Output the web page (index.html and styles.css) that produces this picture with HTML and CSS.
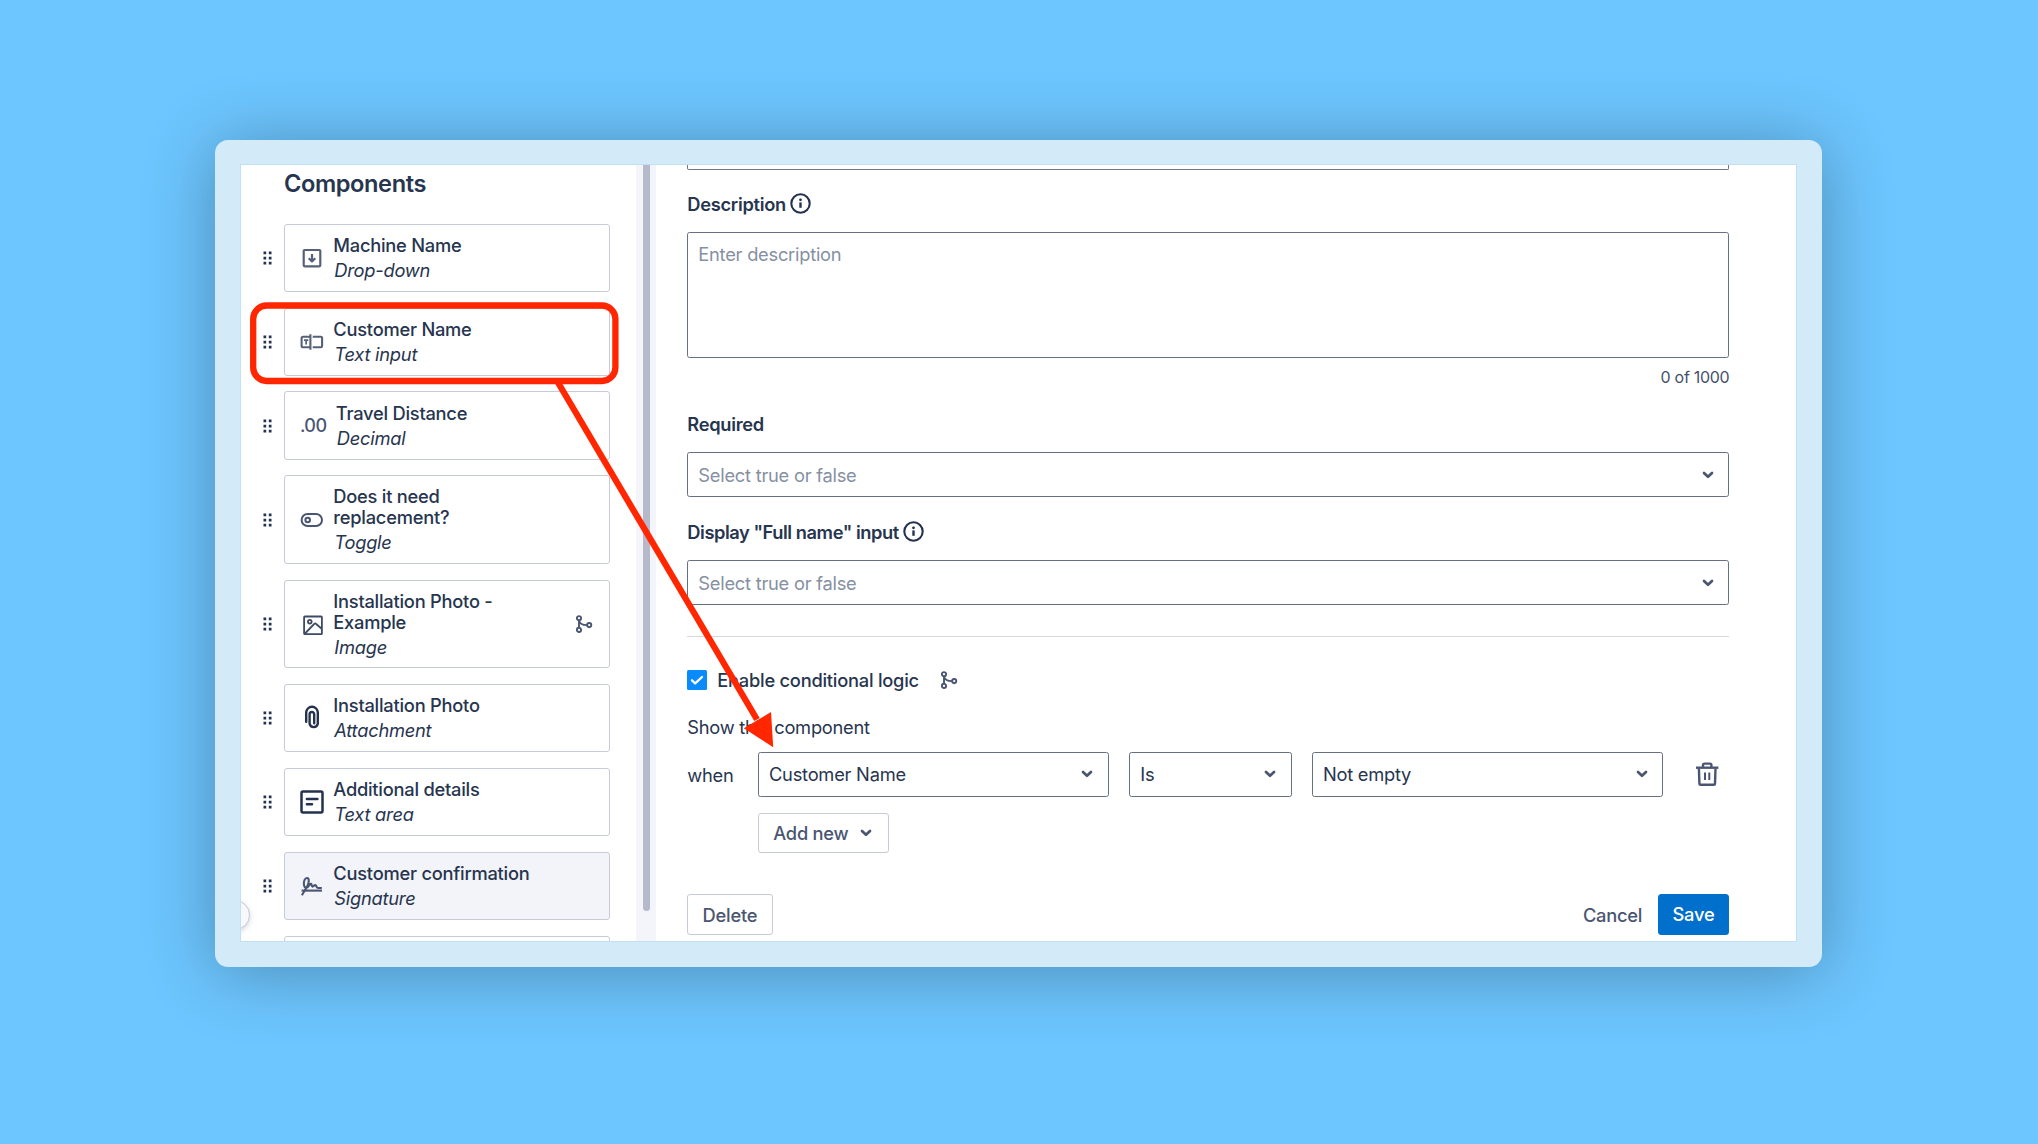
FILE: index.html
```html
<!DOCTYPE html>
<html lang="en">
<head>
<meta charset="utf-8">
<title>Components</title>
<link rel="stylesheet" href="styles.css">
</head>
<body>
<svg class="defs" width="0" height="0">
  <symbol id="grip" viewBox="0 0 10 14">
    <path d="M.5 .6h2.7v2.7H.5zM5.8 .6h2.7v2.7H5.8zM.5 5.7h2.7v2.7H.5zM5.8 5.7h2.7v2.7H5.8zM.5 10.8h2.7v2.7H.5zM5.8 10.8h2.7v2.7H5.8z" fill="#24324f"/>
  </symbol>
  <symbol id="chevron" viewBox="0 0 12 8">
    <path d="M2 2l4 3.8L10 2" fill="none" stroke="#4a5671" stroke-width="2.7" stroke-linecap="round" stroke-linejoin="round"/>
  </symbol>
  <symbol id="info" viewBox="0 0 21 21">
    <circle cx="10.5" cy="10.5" r="9.2" fill="none" stroke="#24324f" stroke-width="2.1"/>
    <circle cx="10.5" cy="6.8" r="1.4" fill="#24324f"/>
    <path d="M10.5 9.4v5.4" stroke="#24324f" stroke-width="2.4"/>
  </symbol>
  <symbol id="branch" viewBox="0 0 18 18">
    <g fill="none" stroke="#4a5671" stroke-width="1.9">
      <circle cx="4" cy="3.2" r="2.1"/>
      <circle cx="4" cy="14.9" r="2.1"/>
      <circle cx="14.2" cy="10.1" r="2.1"/>
      <path d="M4 5.3v7.5M4 5.3c.5 3.2 3.300 4.700 8.100 4.800"/>
    </g>
  </symbol>
</svg>

<main class="frame">
  <div class="screen">
    <aside class="sidebar">
      <div class="list">
        <h1 class="heading">Components</h1>
        <div class="item">
          <svg class="grip"><use href="#grip"/></svg>
          <div class="card">
            <svg class="icon" viewBox="0 0 24 24"><g fill="none" stroke="#566178" stroke-width="2.200" stroke-linejoin="round"><rect x="3.700" y="4" width="16.600" height="16.300" rx="1"/><path d="M12 8v7.200M8.700 12.200l3.300 3.300 3.300-3.300"/></g></svg>
            <div class="text"><div class="name">Machine Name</div><div class="kind">Drop-down</div></div>
          </div>
        </div>
        <div class="item">
          <svg class="grip"><use href="#grip"/></svg>
          <div class="card">
            <svg class="icon" viewBox="0 0 24 24"><g fill="none" stroke="#566178" stroke-width="2.100"><path d="M9.700 6.700H3.200a1.600 1.600 0 0 0-1.600 1.600v7.400a1.600 1.600 0 0 0 1.600 1.600h6.500M10.400 4.200v15.600M12.700 6.700h8a1.400 1.400 0 0 1 1.400 1.400v7.800a1.400 1.400 0 0 1-1.400 1.400h-8"/><path d="M4 10.200h4.300M6.150 10.200v4.300" stroke-width="1.700"/></g></svg>
            <div class="text"><div class="name">Customer Name</div><div class="kind">Text input</div></div>
          </div>
        </div>
        <div class="item">
          <svg class="grip"><use href="#grip"/></svg>
          <div class="card">
            <span class="decimal">.00</span>
            <div class="text"><div class="name">Travel Distance</div><div class="kind">Decimal</div></div>
          </div>
        </div>
        <div class="item tall">
          <svg class="grip"><use href="#grip"/></svg>
          <div class="card">
            <svg class="icon" viewBox="0 0 24 24"><g fill="none" stroke="#4a5671" stroke-width="2"><rect x="1.600" y="6" width="20.400" height="12" rx="6"/><circle cx="7.700" cy="12" r="2.300"/></g></svg>
            <div class="text"><div class="name">Does it need<br>replacement?</div><div class="kind">Toggle</div></div>
          </div>
        </div>
        <div class="item tall">
          <svg class="grip"><use href="#grip"/></svg>
          <div class="card">
            <svg class="icon" viewBox="0 0 24 24"><g fill="none" stroke="#3d4a66" stroke-width="1.800" stroke-linejoin="round"><rect x="4.100" y="4.500" width="17.800" height="17.700" rx=".8"/><circle cx="9.800" cy="9.700" r="1.800"/><path d="M5 21.500l9.500-9.800a1 1 0 0 1 1.400 0l5.800 5"/></g></svg>
            <div class="text"><div class="name">Installation Photo -<br>Example</div><div class="kind">Image</div></div>
            <svg class="branch"><use href="#branch"/></svg>
          </div>
        </div>
        <div class="item">
          <svg class="grip"><use href="#grip"/></svg>
          <div class="card">
            <svg class="icon" viewBox="0 0 24 24"><path d="M6.200 15.800V6.600a5.700 5.700 0 0 1 11.600 0v11.200a4.200 4.200 0 0 1-8.200 0V8.300a2.300 2.300 0 0 1 4.600 0v8.900" fill="none" stroke="#24324f" stroke-width="2.400" stroke-linecap="round"/></svg>
            <div class="text"><div class="name">Installation Photo</div><div class="kind">Attachment</div></div>
          </div>
        </div>
        <div class="item">
          <svg class="grip"><use href="#grip"/></svg>
          <div class="card">
            <svg class="icon" viewBox="0 0 24 24"><g fill="none" stroke="#24324f" stroke-width="2.500"><rect x="1.500" y="1.500" width="21" height="21" rx="1.500"/><path d="M6.900 9H17.400M6.900 14.300h5.100" stroke-linecap="round"/></g></svg>
            <div class="text"><div class="name">Additional details</div><div class="kind">Text area</div></div>
          </div>
        </div>
        <div class="item">
          <svg class="grip"><use href="#grip"/></svg>
          <div class="card selected">
            <svg class="icon" viewBox="0 0 24 24"><g fill="none" stroke="#4a5671" stroke-width="2.100" stroke-linejoin="round"><path d="M1.600 16.600H22"/><path d="M1.900 21.200C3.400 18.500 5.600 15.600 7.300 12.200C9.100 8.600 9.500 4.100 7.100 4C4.700 3.900 3.600 7.600 3.900 10.300C4.100 12.600 5.200 14 6.700 13.800C8.400 13.600 9.500 10.300 10.700 9.800C12 9.300 11.300 12.700 12.600 12.600C13.700 12.500 14.200 11 15.300 11.100C16.500 11.200 16 13.200 17.500 13.700C18.900 14.100 20.200 13.900 21.800 14"/></g></svg>
            <div class="text"><div class="name">Customer confirmation</div><div class="kind">Signature</div></div>
          </div>
        </div>
        <div class="item"><span></span><div class="card"></div></div>
      </div>
      <div class="track"><div class="thumb"></div></div>
      <div class="collapse"></div>
    </aside>

    <section class="form">
      <div class="field-end"></div>
      <div class="label first">Description<svg class="info"><use href="#info"/></svg></div>
      <div class="textarea">Enter description</div>
      <div class="counter">0 of 1000</div>
      <div class="label required">Required</div>
      <div class="select placeholder">Select true or false<svg class="chevron"><use href="#chevron"/></svg></div>
      <div class="label display"><span class="tight">Display "Full name" input</span><svg class="info"><use href="#info"/></svg></div>
      <div class="select placeholder">Select true or false<svg class="chevron"><use href="#chevron"/></svg></div>
      <div class="divider"></div>
      <div class="enable">
        <svg class="checkbox" viewBox="0 0 20 20"><rect width="20" height="20" rx="1.500" fill="#0a8bfb"/><path d="M5 10.300l3.200 3L15 7" fill="none" stroke="#fff" stroke-width="2.300" stroke-linecap="round" stroke-linejoin="round"/></svg>
        <span>Enable conditional logic</span>
        <svg class="branch"><use href="#branch"/></svg>
      </div>
      <div class="show">Show this component</div>
      <div class="condition">
        <span class="when">when</span>
        <div class="select">Customer Name<svg class="chevron"><use href="#chevron"/></svg></div>
        <div class="select">Is<svg class="chevron"><use href="#chevron"/></svg></div>
        <div class="select">Not empty<svg class="chevron"><use href="#chevron"/></svg></div>
        <svg class="trash" viewBox="0 0 24 24"><g fill="none" stroke="#4a5671" stroke-width="2.400" stroke-linejoin="round"><path d="M1 5.700h22.400"/><path d="M8 5V2.900a1.300 1.300 0 0 1 1.300-1.300h5.800a1.300 1.300 0 0 1 1.300 1.300V5"/><path d="M3.900 6.500l.5 15.200a1.100 1.100 0 0 0 1.100 1.100h13.400a1.100 1.100 0 0 0 1.100-1.100l.5-15.200"/><path d="M10 10.500v7.500M14.300 10.500v7.500" stroke-width="2"/></g></svg>
      </div>
      <div class="button add">Add new<svg class="chevron"><use href="#chevron"/></svg></div>
      <div class="footer">
        <div class="button">Delete</div>
        <span class="cancel">Cancel</span>
        <div class="save">Save</div>
      </div>
    </section>
  </div>
</main>

<svg class="annotation" viewBox="0 0 2038 1144">
  <rect x="253.200" y="305.500" width="362.200" height="75.500" rx="13.500" fill="none" stroke="#ff2600" stroke-width="6.300"/>
  <path d="M556.500 380L757 719.500" stroke="#ff2600" stroke-width="6.300"/>
  <path d="M743.800 728.300L771 712L773.200 747.300z" fill="#ff2600"/>
</svg>
</body>
</html>
```
FILE: styles.css
```css
* { box-sizing: border-box; }

body {
  margin: 0;
  height: 1144px;
  padding: 140px 216px 0 215px;
  overflow: hidden;
  background: #6dc6ff;
  color: #27354f;
  font: 400 18.3px/24px Inter, "Liberation Sans", sans-serif;
  letter-spacing: -0.24px;
}

svg { display: block; flex: none; overflow: visible; }
.defs { position: absolute; }

.frame {
  height: 827px;
  padding: 25px 26px;
  border-radius: 13px;
  background: #d3eaf8;
  box-shadow: 0 5px 70px rgba(0, 0, 0, .3);
}

.screen {
  display: flex;
  height: 776px;
  overflow: hidden;
  background: #fff;
  box-shadow: 0 0 0 1px #c1e0f5;
}

.sidebar {
  display: flex;
  position: relative;
  flex: none;
  width: 415px;
}

.list { width: 395px; padding: 6.700px 25.700px 0 21.500px; }

.heading {
  margin: 0 0 28px 21.500px;
  font-size: 23.600px;
  line-height: 24px;
  font-weight: 600;
  letter-spacing: -.4px;
}

.item {
  display: grid;
  grid-template-columns: 21.500px 326.300px;
  align-items: center;
  height: 68.100px;
  margin-bottom: 15.800px;
}
.item.tall { height: 88.500px; }

.grip { width: 10px; height: 14px; }

.card {
  display: flex;
  align-items: center;
  height: 100%;
  padding-left: 15px;
  border: 1px solid #c6cad9;
  border-radius: 3px;
}
.card.selected { background: #f3f4f9; }

.icon { width: 24px; height: 24px; }
.decimal { width: 26.500px; font-weight: 500; color: #4a5671; font-size: 18px; letter-spacing: -.6px; }
.text { flex: 1; padding: 1.500px 0 0 9.300px; }
.name { font-weight: 500; line-height: 20.800px; margin-bottom: 2.300px; }
.kind { padding-left: 1px; font-style: italic; }
.branch { width: 18px; height: 18px; }
.card .branch { margin-right: 16.500px; }

.track { width: 20px; padding-left: 6.500px; background: #f4f5fa; }
.thumb { width: 7.500px; height: 746px; border-radius: 0 0 4px 4px; background: #b6b9c9; }

.collapse {
  position: absolute;
  left: -21.500px;
  bottom: 11px;
  width: 30px;
  height: 30px;
  border: 1px solid #c6c9d6;
  border-radius: 50%;
  background: #f8f8fb;
  box-shadow: 0 2px 5px rgba(36, 50, 79, .2);
}

.form { flex: 1; padding: 0 66.700px 0 31.300px; }

.field-end { height: 4.600px; border: 1px solid #6e778b; border-top: 0; border-radius: 0 0 2px 2px; }

.label { display: flex; align-items: center; gap: 4px; height: 24px; margin-bottom: 16px; font-weight: 600; letter-spacing: -.3px; }
.first { margin-top: 22.200px; }
.required { margin-top: 25.200px; }
.display { margin-top: 22.500px; }
.tight { letter-spacing: -.45px; }
.info { width: 21px; height: 21px; }

.textarea {
  height: 126.700px;
  padding: 9px 10px;
  border: 1px solid #667085;
  border-radius: 2.500px;
  color: #8590a2;
}

.counter { margin-top: 8.300px; font-size: 16px; line-height: 20px; letter-spacing: -.3px; text-align: right; color: #44506b; }

.select {
  display: flex;
  align-items: center;
  justify-content: space-between;
  height: 45.500px;
  padding: 0 14.500px 0 10px;
  border: 1px solid #667085;
  border-radius: 2.500px;
}
.placeholder { color: #8590a2; }
.chevron { width: 12px; height: 8px; }

.divider { height: 1px; margin: 30.300px 0 31px; background: #d5d8e2; }

.enable { display: flex; align-items: center; height: 24px; font-weight: 500; }
.checkbox { width: 20px; height: 20px; margin-right: 10px; }
.enable .branch { margin-left: 21.300px; }

.show { margin: 23.300px 0 12.700px; }

.condition { display: flex; align-items: center; }
.when { width: 70.700px; padding-top: 2px; }
.condition .select { width: 350.700px; margin-right: 20.600px; }
.condition .select:nth-of-type(2) { width: 162.700px; margin-right: 20px; }
.condition .select:nth-of-type(3) { width: 351.300px; margin-right: 31.500px; }
.trash { width: 24px; height: 24px; }

.button {
  display: flex;
  align-items: center;
  height: 40.500px;
  padding: 0 14.300px;
  border: 1px solid #c6cad9;
  border-radius: 3px;
  font-weight: 500;
  color: #4a5671;
}
.add { width: 131px; margin: 15.300px 0 41.300px 70.700px; padding-right: 16px; justify-content: space-between; }

.footer { display: flex; align-items: center; }
.cancel { margin: 0 15.500px 0 auto; font-weight: 500; color: #4a5671; }
.save {
  width: 71.700px;
  height: 40.500px;
  border-radius: 3.500px;
  background: #0070cc;
  color: #fff;
  font-weight: 500;
  line-height: 40.500px;
  text-align: center;
}

.annotation { position: absolute; left: 0; top: 0; width: 2038px; height: 1144px; pointer-events: none; }
```
